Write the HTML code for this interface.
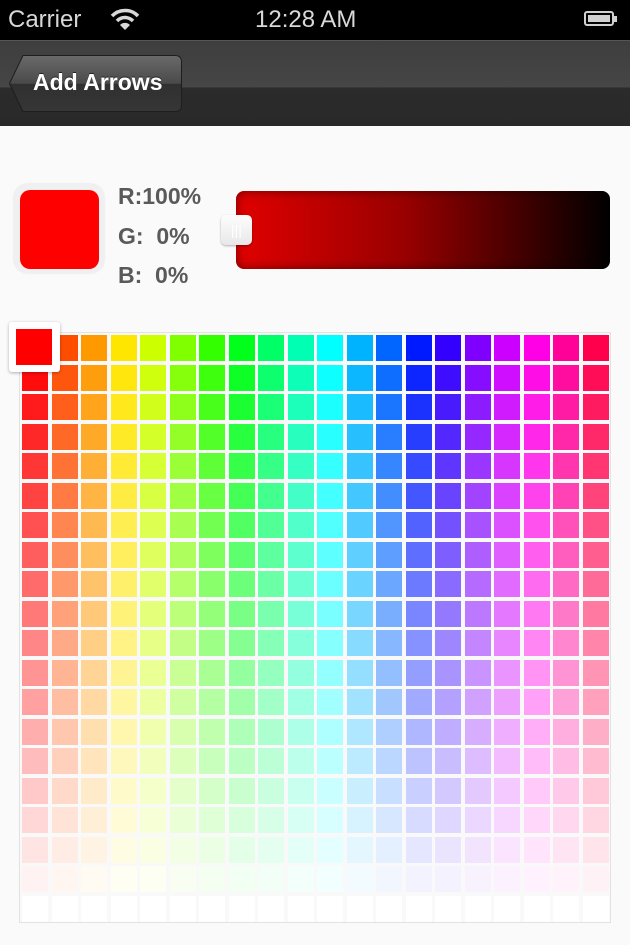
<!DOCTYPE html>
<html><head><style>
body{margin:0;width:630px;height:945px;background:#fafafa;font-family:"Liberation Sans",sans-serif;position:relative;overflow:hidden}
.status{position:absolute;left:0;top:0;width:630px;height:40px;background:#000;color:#d8d8d8;font-size:24px}
.nav{position:absolute;left:0;top:40px;width:630px;height:86px;background:linear-gradient(#3e3e3e,#464646 55%,#2b2b2b 55%,#292929);border-top:1px solid #555;box-sizing:border-box}
.backtxt{position:absolute;left:33px;top:14px;color:#fff;font-weight:bold;font-size:23px;line-height:55px;text-shadow:0 -1px 0 #222}
.sw{position:absolute;left:14px;top:184px;width:90px;height:89px;border-radius:14px;background:#f0f0f0;box-shadow:0 0 2px #ddd}
.sw div{position:absolute;left:6px;top:6px;width:79px;height:79px;border-radius:10px;background:#f00}
.lbl{position:absolute;left:118px;color:#5a5a5a;font-weight:bold;font-size:23px}
.bar{position:absolute;left:236px;top:191px;width:374px;height:78px;border-radius:8px;background:linear-gradient(90deg,#e00000,#900 45%,#000);box-shadow:inset 0 0 10px rgba(0,0,0,.5)}
.thumb{position:absolute;left:221px;top:215px;width:31px;height:30px;border-radius:5px;background:linear-gradient(#fdfdfd,#e8e8e8);box-shadow:0 1px 2px rgba(0,0,0,.3);color:#fff;font-size:14px;text-align:center;line-height:30px}
.grid{position:absolute;left:19px;top:332px;width:590px;height:589px;border:1px solid #e2e2e2;background:#f9f9f9}
.c{position:absolute;width:26px;height:26px}
.sel{position:absolute;left:9px;top:322px;width:51px;height:50px;background:#fff;border-radius:3px;box-shadow:0 1px 3px rgba(0,0,0,.3)}
.sel div{position:absolute;left:7px;top:7px;width:36px;height:36px;background:#f00}
</style></head><body>
<div class="status">
<span style="position:absolute;left:8px;top:6px">Carrier</span>
<svg style="position:absolute;left:110px;top:8px" width="30" height="22" viewBox="0 0 30 22"><path d="M2 8 A18 18 0 0 1 28 8" stroke="#d8d8d8" stroke-width="3.5" fill="none"/><path d="M7 13 A11 11 0 0 1 23 13" stroke="#d8d8d8" stroke-width="3.5" fill="none"/><path d="M15 22 L10 17 A7 7 0 0 1 20 17Z" fill="#d8d8d8"/></svg>
<span style="position:absolute;left:255px;top:6px">12:28 AM</span>
<div style="position:absolute;left:584px;top:11px;width:30px;height:15px;border:2px solid #d0d0d0;border-radius:3px;box-sizing:border-box;padding:2px"><div style="background:#d0d0d0;height:100%"></div></div>
<div style="position:absolute;left:614px;top:16px;width:3px;height:6px;background:#d0d0d0"></div>
</div>
<div class="nav">
<svg style="position:absolute;left:0;top:0" width="200" height="86">
<defs><linearGradient id="bg" x1="0" y1="0" x2="0" y2="1"><stop offset="0" stop-color="#6a6a6a"/><stop offset="0.5" stop-color="#4a4a4a"/><stop offset="0.51" stop-color="#303030"/><stop offset="1" stop-color="#363636"/></linearGradient></defs>
<path d="M9.5 42.5 L23 14.5 H175 Q181.5 14.5 181.5 21 V64 Q181.5 70.5 175 70.5 H23 Z" fill="url(#bg)" stroke="#1e1e1e" stroke-width="1"/>
</svg>
<div class="backtxt">Add Arrows</div>
</div>
<div class="sw"><div></div></div>
<div class="lbl" style="top:183px">R:100%</div>
<div class="lbl" style="top:223px">G:&nbsp; 0%</div>
<div class="lbl" style="top:262px">B:&nbsp; 0%</div>
<div class="bar"></div>
<div class="thumb">|||</div>
<div class="grid" id="g"></div>
<div class="sel"><div></div></div>
<script>
function hsl(h){h/=60;var x=1-Math.abs(h%2-1),i=Math.floor(h)%6;
return [[1,x,0],[x,1,0],[0,1,x],[0,x,1],[x,0,1],[1,0,x]][i];}
var g=document.getElementById('g'),s='';
for(var r=0;r<20;r++)for(var c=0;c<20;c++){var t=hsl(c*18),f=r/19;
var col=t.map(function(v){return Math.round(255*(v+(1-v)*f))});
s+='<div class="c" style="left:'+(2+c*29.5)+'px;top:'+(2+r*29.5)+'px;background:rgb('+col.join(',')+')"></div>';}
g.innerHTML=s;
</script>
</body></html>
